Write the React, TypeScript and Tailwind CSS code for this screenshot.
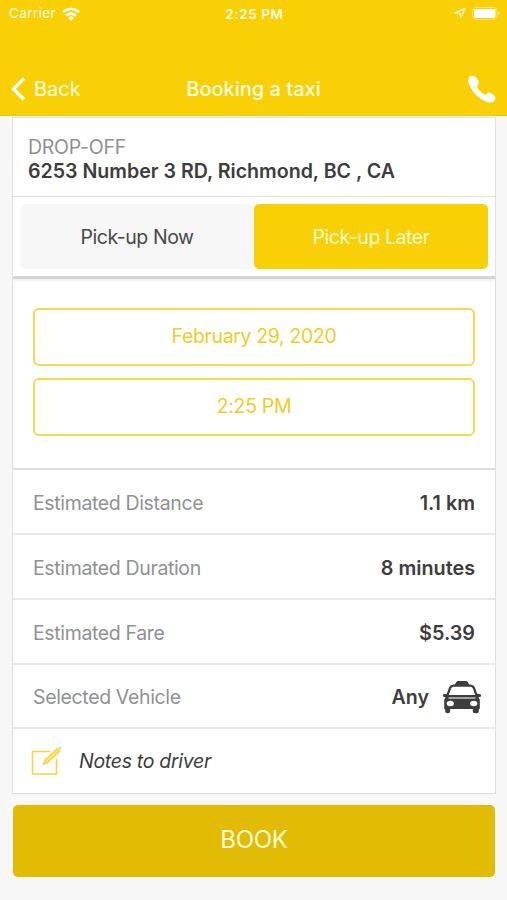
import type { ReactNode } from "react";

const ESTIMATES = [
  { label: "Estimated Distance", value: "1.1 km" },
  { label: "Estimated Duration", value: "8 minutes" },
  { label: "Estimated Fare", value: "$5.39" },
];

function WifiIcon() {
  return (
    <svg viewBox="0 0 18 14" className="h-[14px] w-[18px]" fill="none" stroke="#fffef0" strokeWidth="2.7">
      <path d="M1 5.200a11.600 11.600 0 0 1 16 0" />
      <path d="M4 8.700a7.200 7.200 0 0 1 10 0" />
      <path d="M9 13.800 6 10.900a4.300 4.300 0 0 1 6 0z" fill="#fffef0" stroke="none" />
    </svg>
  );
}

function LocationIcon() {
  return (
    <svg viewBox="0 0 12 12" className="h-3 w-3" fill="none" stroke="#fff6c4" strokeWidth="1.5" strokeLinejoin="round">
      <path d="M11 1.500 6.800 10.500 6 6.500 1 5.900z" />
    </svg>
  );
}

function BatteryIcon() {
  return (
    <svg viewBox="0 0 28 13" className="h-[13px] w-[28px]">
      <rect x="0.5" y="0.5" width="24.5" height="12" rx="3" fill="none" stroke="#fbe273" />
      <rect x="2" y="2" width="21.500" height="9" rx="1.500" fill="#fff" />
      <path d="M26.200 4.500v4c1-.4 1.300-1.100 1.300-2s-.3-1.600-1.300-2z" fill="#fbe273" />
    </svg>
  );
}

function PhoneIcon() {
  return (
    <svg viewBox="0 0 28 28" className="h-7 w-7" fill="#fff">
      <path d="M1.300 2.300C2.500.9 4.700.3 6.200.9c1.700.7 3.500 3.300 4.300 5.200.7 1.700.3 2.900-.8 3.900-.9.800-.9 1.500-.4 2.500 1.500 2.800 4 5.100 6.700 6.700 1 .5 1.700.4 2.500-.5 1.100-1.100 2.300-1.400 3.900-.7 1.900.9 4.300 2.600 4.900 4.200.5 1.500-.5 3.500-2 4.500-2 1.200-4.600 1-7.200-.1C10.700 23.500 4.200 17 1.200 10 0 7.200-.1 4.200 1.300 2.300z" />
    </svg>
  );
}

function TaxiIcon() {
  return (
    <svg viewBox="0 0 40 34" className="h-[34px] w-10" fill="#3d3d3d">
      <path d="M14 2.500Q14.500 1 16 1h8q1.500 0 2 1.500l1.800 3H12.200z" />
      <path d="M11.500 4.500h17q3 0 4.300 2.600L35.300 14h2.200q1.700 0 1.700 1.500T37.300 17l-.8.100 1.300 2.600v8.500q0 1-1 1.300v1.800q0 1.900-2.200 1.900h-1.600q-2.200 0-2.200-1.900V29H8.200v2.300q0 1.900-2.200 1.900H5.400q-2.200 0-2.200-1.900v-1.800q-1-.3-1-1.300v-8.500l1.300-2.600-.8-.1Q.8 17 .8 15.500T2.500 14h2.200l2.500-6.900Q8.500 4.500 11.500 4.500z" />
      <path d="M11.500 6.700h17q1.700 0 2.400 1.700l2.300 6.600H6.800l2.300-6.600q.7-1.700 2.400-1.700z" fill="#fff" />
      <path d="M6.500 18h27" stroke="#c4c4c4" strokeWidth="1.500" />
      <ellipse cx="8.300" cy="23.500" rx="3.600" ry="2.800" fill="#fff" />
      <ellipse cx="31.700" cy="23.500" rx="3.600" ry="2.800" fill="#fff" />
    </svg>
  );
}

function NoteIcon() {
  return (
    <svg viewBox="0 0 31 30" className="h-[30px] w-[31px]" fill="none" stroke="#f8d440" strokeWidth="1.500">
      <path d="M19.500 5.500H1.500v22.500h24V12.500" />
      <path d="m12.500 18 1.300-3.700L26 2.700l2.500 2.500-12.200 11.600z" fill="#fae27c" />
      <path d="m28 1.300 1.500 1.500" strokeWidth="2.500" />
    </svg>
  );
}

function Row({ label, children }: { label: string; children: ReactNode }) {
  return (
    <div className="flex items-center justify-between border-b-2 border-[#e9e9e9] px-5 pt-1">
      <span className="tracking-[-0.36px] text-[#8f9193]">{label}</span>
      {children}
    </div>
  );
}

export default function App() {
  return (
    <div className="flex h-[900px] w-[507px] flex-col overflow-hidden bg-[#f7f7f7] font-['Inter',sans-serif] text-[19.5px] text-[#3d3d3d]">
      <header className="h-[116px] border-b border-[#e9c717] bg-[#f9d006] text-[#fffce0]">
        <div className="grid h-7 grid-cols-3 items-center pr-[7px] pl-[9px] text-[13.5px]">
          <div className="flex items-center gap-1.5 pb-px">
            <span className="tracking-[0.4px]">Carrier</span>
            <WifiIcon />
          </div>
          <span className="text-center font-semibold tracking-[0.6px]">2:25 PM</span>
          <div className="flex items-center justify-end gap-1.5 pb-0.5">
            <LocationIcon />
            <BatteryIcon />
          </div>
        </div>
        <div className="mt-[34px] grid h-[54px] grid-cols-[1fr_2fr_1fr] items-center pr-[11px] pl-[11px] text-[20px]">
          <button type="button" className="flex items-center gap-2 text-left">
            <svg viewBox="0 0 15 24" className="h-6 w-[15px]" fill="none" stroke="#fff" strokeWidth="3.400">
              <path d="M13 1.500 2.500 12 13 22.500" />
            </svg>
            Back
          </button>
          <h1 className="text-center font-medium">Booking a taxi</h1>
          <button type="button" title="Call" className="flex justify-end">
            <PhoneIcon />
          </button>
        </div>
      </header>

      <main className="mt-px mr-[11px] ml-3 flex h-[677px] flex-col border border-[#dfdfdf] bg-white">
        <section className="flex h-[79px] flex-col justify-center border-b border-[#dfdfdf] pt-[3px] pl-[15px] leading-6">
          <span className="tracking-[-0.25px] text-[#8f9193]">DROP-OFF</span>
          <span className="text-[19.6px] font-semibold">6253 Number 3 RD, Richmond, BC , CA</span>
        </section>

        <section className="grid h-[79px] grid-cols-2 px-[7px] pt-[7px] pb-[7px] tracking-[-0.45px]">
          <button type="button" className="rounded-[5px] bg-[#f7f7f7] pt-[3px] text-[#484848]">
            Pick-up Now
          </button>
          <button type="button" className="rounded-[5px] bg-[#f9d006] pt-[3px] text-[#fffbd0]">
            Pick-up Later
          </button>
        </section>

        <section className="flex h-[194px] flex-col gap-3 border-t-[3px] border-b-2 border-t-[#d4d4d4] border-b-[#dedede] px-5 pt-[29px] tracking-[-0.35px] text-[#f0cd25] shadow-[inset_0_2px_2px_#f0f0f0]">
          <button type="button" className="h-[58px] shrink-0 rounded-[6px] border-2 border-[#f6d94f]">
            February 29, 2020
          </button>
          <button type="button" className="h-[58px] shrink-0 rounded-[6px] border-2 border-[#f6d94f]">
            2:25 PM
          </button>
        </section>

        <section className="grid flex-1 grid-rows-[65px_65px_65px_64px_1fr]">
          {ESTIMATES.map((item) => (
            <Row key={item.label} label={item.label}>
              <span className="text-[19.8px] font-semibold">{item.value}</span>
            </Row>
          ))}
          <Row label="Selected Vehicle">
            <span className="-mr-[7px] flex items-center gap-[13px] text-[19.6px] font-semibold">
              Any
              <span className="-mt-0.5">
                <TaxiIcon />
              </span>
            </span>
          </Row>
          <div className="flex items-center gap-[17px] pl-[18px] tracking-[-0.3px] italic">
            <NoteIcon />
            <span className="pt-px">Notes to driver</span>
          </div>
        </section>
      </main>

      <button type="button" className="mt-[11px] mr-3 ml-[13px] h-[72px] rounded-[5px] bg-[#e2bc04] pb-[3px] text-[24px] tracking-[-0.3px] text-[#fffbd6]">
        BOOK
      </button>
    </div>
  );
}
